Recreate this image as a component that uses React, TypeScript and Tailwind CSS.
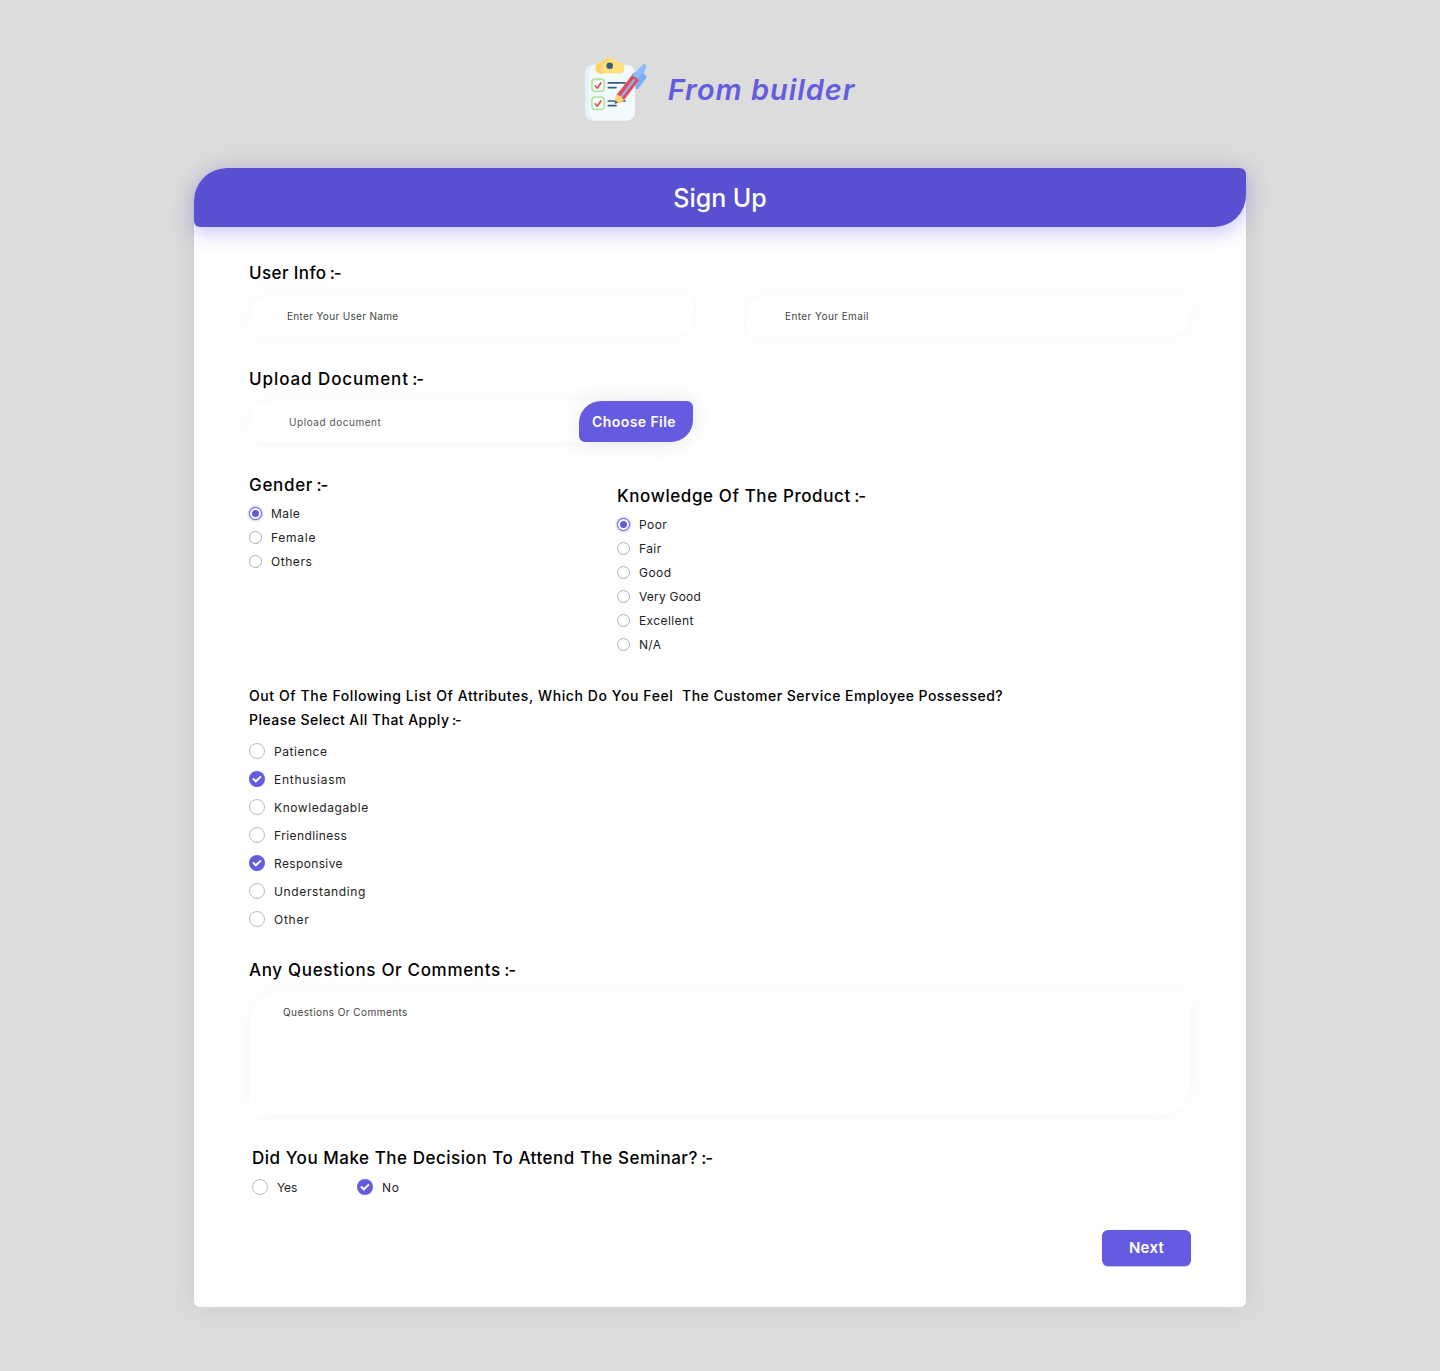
import React from "react";

type Item = { label: string; tracking: string; checked?: boolean };

const genders: Item[] = [
  { label: "Male", tracking: "tracking-[0.45px]", checked: true },
  { label: "Female", tracking: "tracking-[0.75px]" },
  { label: "Others", tracking: "tracking-[0.55px]" },
];

const ratings: Item[] = [
  { label: "Poor", tracking: "tracking-[0.45px]", checked: true },
  { label: "Fair", tracking: "tracking-[0.4px]" },
  { label: "Good", tracking: "tracking-[0.45px]" },
  { label: "Very Good", tracking: "tracking-[0.2px]" },
  { label: "Excellent", tracking: "tracking-[0.4px]" },
  { label: "N/A", tracking: "tracking-[0.3px]" },
];

const attributes: Item[] = [
  { label: "Patience", tracking: "tracking-[0.55px]" },
  { label: "Enthusiasm", tracking: "tracking-[0.72px]", checked: true },
  { label: "Knowledagable", tracking: "tracking-[0.58px]" },
  { label: "Friendliness", tracking: "tracking-[0.4px]" },
  { label: "Responsive", tracking: "tracking-[0.36px]", checked: true },
  { label: "Understanding", tracking: "tracking-[0.64px]" },
  { label: "Other", tracking: "tracking-[0.76px]" },
];

const fieldShape =
  "rounded-tl-[24px] rounded-tr-[6px] rounded-br-[24px] rounded-bl-[6px] bg-white shadow-[0_0_25px_rgba(0,0,0,0.04)]";

function Logo() {
  return (
    <svg width="64" height="66" viewBox="0 0 64 66" fill="none" className="shrink-0">
      <rect x="0" y="7.700" width="50" height="56" rx="8.5" fill="#f3fafe" />
      <path d="M8.5 7.700A8.5 8.5 0 0 0 0 16.200V55.200A8.500 8.500 0 0 0 8.500 63.700H12A8.500 8.500 0 0 1 4 55.200V16.200A8.500 8.500 0 0 1 12 7.700Z" fill="#e2f3fb" />
      <path d="M15 5.500H17.500C19 2.500 21.500 1 24.700 1S30.500 2.500 32 5.500H35A5.700 5.700 0 0 1 35 16.600H15A5.700 5.700 0 0 1 15 5.500Z" fill="#ffe07d" />
      <path d="M15 5.500H17.500C19 2.500 21.500 1 24.700 1C22.500 2 21 4.500 20.200 6.500C17 7 14.800 9 14.800 11.500C14.800 14 16.500 16 19 16.600H15A5.700 5.700 0 0 1 15 5.500Z" fill="#ffd064" />
      <circle cx="24.700" cy="8.800" r="3.300" fill="#365e7d" />
      <rect x="6.900" y="22.100" width="12.300" height="12.300" rx="3.200" fill="#f6fcf6" stroke="#b4e6a0" strokeWidth="1.700" />
      <rect x="6.900" y="40.100" width="12.300" height="12.300" rx="3.200" fill="#f6fcf6" stroke="#b4e6a0" strokeWidth="1.700" />
      <path d="M10.200 28.800L12.300 31.200L15.900 26M10.200 46.800L12.300 49.200L15.900 44" stroke="#dd4f5f" strokeWidth="1.700" strokeLinecap="round" strokeLinejoin="round" />
      <path d="M23.300 25.900H40M23.300 30.600H31M23.300 44H40M23.300 48.600H31" stroke="#365e7d" strokeWidth="1.700" strokeLinecap="round" />
      <path d="M46.500 17L51.500 14.800L57.500 8.300A2 2 0 0 1 61.200 9.500L58.500 16.500L60.500 18.300A2.500 2.500 0 0 1 60.500 22L54 30.700A1.800 1.800 0 0 1 50.300 29.500L53 24Z" fill="#78aef5" />
      <path d="M47 17L51.500 14.500L57.500 8.300A2 2 0 0 1 61.200 9.700L56.500 17.500L53.500 21.500Z" fill="#8cbcff" />
      <path d="M31.500 38L47 18L54 23.300L38.800 43.500Z" fill="#dd4f5f" />
      <path d="M36.300 39.800L49 23" stroke="#8fb4ee" strokeWidth="2.100" strokeLinecap="round" />
      <path d="M31.500 38C34.500 38 38 40.500 38.800 43.500C37 46 34.500 46.300 32.500 46.200L30.300 44.700C29.800 42 30 40 31.500 38Z" fill="#ffd273" />
      <path d="M30.400 43.600L29.600 47L33 45.800Z" fill="#365e7d" />
    </svg>
  );
}

function Radio({ label, tracking, checked }: Item) {
  return (
    <label className="flex h-[13px] items-center gap-[9px]">
      {checked ? (
        <span className="flex size-[13px] items-center justify-center rounded-full border-[1.5px] border-[#655be0] bg-white shadow-[0_0_3px_rgba(101,91,224,0.8)]">
          <span className="size-[7px] rounded-full bg-[#655be0]" />
        </span>
      ) : (
        <span className="size-[13px] rounded-full border border-[#b0b0b0] bg-white" />
      )}
      <span className={`text-xs leading-[13px] whitespace-nowrap text-[#222] ${tracking}`}>{label}</span>
    </label>
  );
}

function Check({ label, tracking, checked }: Item) {
  return (
    <label className="flex h-4 items-center gap-[9px]">
      {checked ? (
        <span className="flex size-4 items-center justify-center rounded-full bg-[#655be0]">
          <svg width="16" height="16" viewBox="0 0 16 16" fill="none">
            <path d="M3.900 7.500L6.900 10.300L12 5.400" stroke="white" strokeWidth="2" />
          </svg>
        </span>
      ) : (
        <span className="size-4 rounded-full border border-[#bcbcbc] bg-white" />
      )}
      <span className={`pt-px text-xs leading-4 whitespace-nowrap text-[#222] ${tracking}`}>{label}</span>
    </label>
  );
}

function Suffix() {
  return <span className="tracking-[-1.2px]">{" :-"}</span>;
}

function Heading({ children, className }: { children: React.ReactNode; className: string }) {
  return (
    <h2 className={`text-[17px] leading-6 font-medium whitespace-pre text-black ${className}`}>
      {children}
      <Suffix />
    </h2>
  );
}

export default function App() {
  return (
    <div className="flex min-h-[1371px] w-full flex-col items-center bg-[#dcdcdc] pb-16 font-['Inter',sans-serif]">
      <header className="mt-[57px] flex h-[66px] items-center gap-[19px]">
        <Logo />
        <h1 className="pb-px text-[29px] leading-9 font-semibold tracking-[0.95px] whitespace-nowrap text-[#655be0] italic">
          From builder
        </h1>
      </header>

      <main className="mt-[45px] h-[1139px] w-[1052px] rounded-tl-[33px] rounded-tr-[6px] rounded-br-[6px] rounded-bl-[6px] bg-white shadow-[0_0_30px_rgba(0,0,0,0.08)]">
        <div className="flex h-[59px] items-center justify-center rounded-tl-[33px] rounded-tr-[6px] rounded-br-[32px] rounded-bl-[6px] bg-[#584fd1] shadow-[0_6px_20px_rgba(88,79,225,0.33)]">
          <span className="text-[25px] leading-8 font-medium tracking-[-0.05px] text-white">Sign Up</span>
        </div>

        <form className="px-[55px] pt-[34px]">
          <Heading className="tracking-[0.39px]">User Info</Heading>
          <div className="mt-[10px] grid grid-cols-2 gap-[52px]">
            <div className={`flex h-[41px] items-center pt-[2px] pl-[38px] ${fieldShape}`}>
              <span className="text-[10px] tracking-[0.33px] text-[#444]">Enter Your User Name</span>
            </div>
            <div className={`flex h-[41px] items-center pt-[2px] pl-[39px] ${fieldShape}`}>
              <span className="text-[10px] tracking-[0.42px] text-[#444]">Enter Your Email</span>
            </div>
          </div>

          <Heading className="mt-[31px] tracking-[0.92px]">Upload Document</Heading>
          <div className={`mt-[10px] flex h-[41px] w-[444px] items-center justify-between pl-10 ${fieldShape}`}>
            <span className="pt-[2px] text-[10px] tracking-[0.55px] text-[#555]">Upload document</span>
            <button
              type="button"
              className="h-[41px] w-[114px] rounded-tl-[22px] rounded-tr-[6px] rounded-br-[22px] rounded-bl-[6px] bg-[#655be0] pr-1 text-sm font-semibold tracking-[0.42px] text-white shadow-[0_0_25px_rgba(0,0,0,0.08)]"
            >
              Choose File
            </button>
          </div>

          <div className="mt-[31px] flex items-start">
            <section className="w-[368px]">
              <Heading className="tracking-[0.69px]">Gender</Heading>
              <div className="mt-[10px] flex flex-col gap-[11px]">
                {genders.map((g) => (
                  <Radio key={g.label} {...g} />
                ))}
              </div>
            </section>
            <section className="pt-[11px]">
              <Heading className="tracking-[0.6px]">Knowledge Of The Product</Heading>
              <div className="mt-[10px] flex flex-col gap-[11px]">
                {ratings.map((r) => (
                  <Radio key={r.label} {...r} />
                ))}
              </div>
            </section>
          </div>

          <div className="mt-[33px] text-sm leading-6 font-medium whitespace-pre text-black">
            <p>
              <span className="tracking-[0.59px]">{"Out Of The Following List Of Attributes, Which Do You Feel  "}</span>
              <span className="tracking-[0.47px]">The Customer Service Employee Possessed?</span>
            </p>
            <p className="tracking-[0.46px]">
              Please Select All That Apply
              <Suffix />
            </p>
          </div>
          <div className="mt-[11px] flex flex-col gap-3">
            {attributes.map((a) => (
              <Check key={a.label} {...a} />
            ))}
          </div>

          <Heading className="mt-[31px] tracking-[0.67px]">Any Questions Or Comments</Heading>
          <div className="mt-[9px] h-[124px] rounded-tl-[32px] rounded-tr-[6px] rounded-br-[32px] rounded-bl-[6px] bg-white pt-[13px] pl-[34px] shadow-[0_0_25px_rgba(0,0,0,0.04)]">
            <p className="text-[10px] leading-4 tracking-[0.44px] text-[#444]">Questions Or Comments</p>
          </div>

          <section className="mt-[31px] pl-[3px]">
            <Heading className="tracking-[0.53px]">Did You Make The Decision To Attend The Seminar?</Heading>
            <div className="mt-[9px] grid grid-cols-[105px_auto]">
              <Check label="Yes" tracking="tracking-[-0.1px]" />
              <Check label="No" tracking="tracking-[0.6px]" checked />
            </div>
          </section>

          <div className="mt-[35px] flex justify-end">
            <button
              type="button"
              className="h-9 w-[89px] rounded-[6px] bg-[#655be0] text-[15px] font-semibold tracking-[0.3px] text-white shadow-[0_1px_0_rgba(101,91,224,0.35)]"
            >
              Next
            </button>
          </div>
        </form>
      </main>
    </div>
  );
}
